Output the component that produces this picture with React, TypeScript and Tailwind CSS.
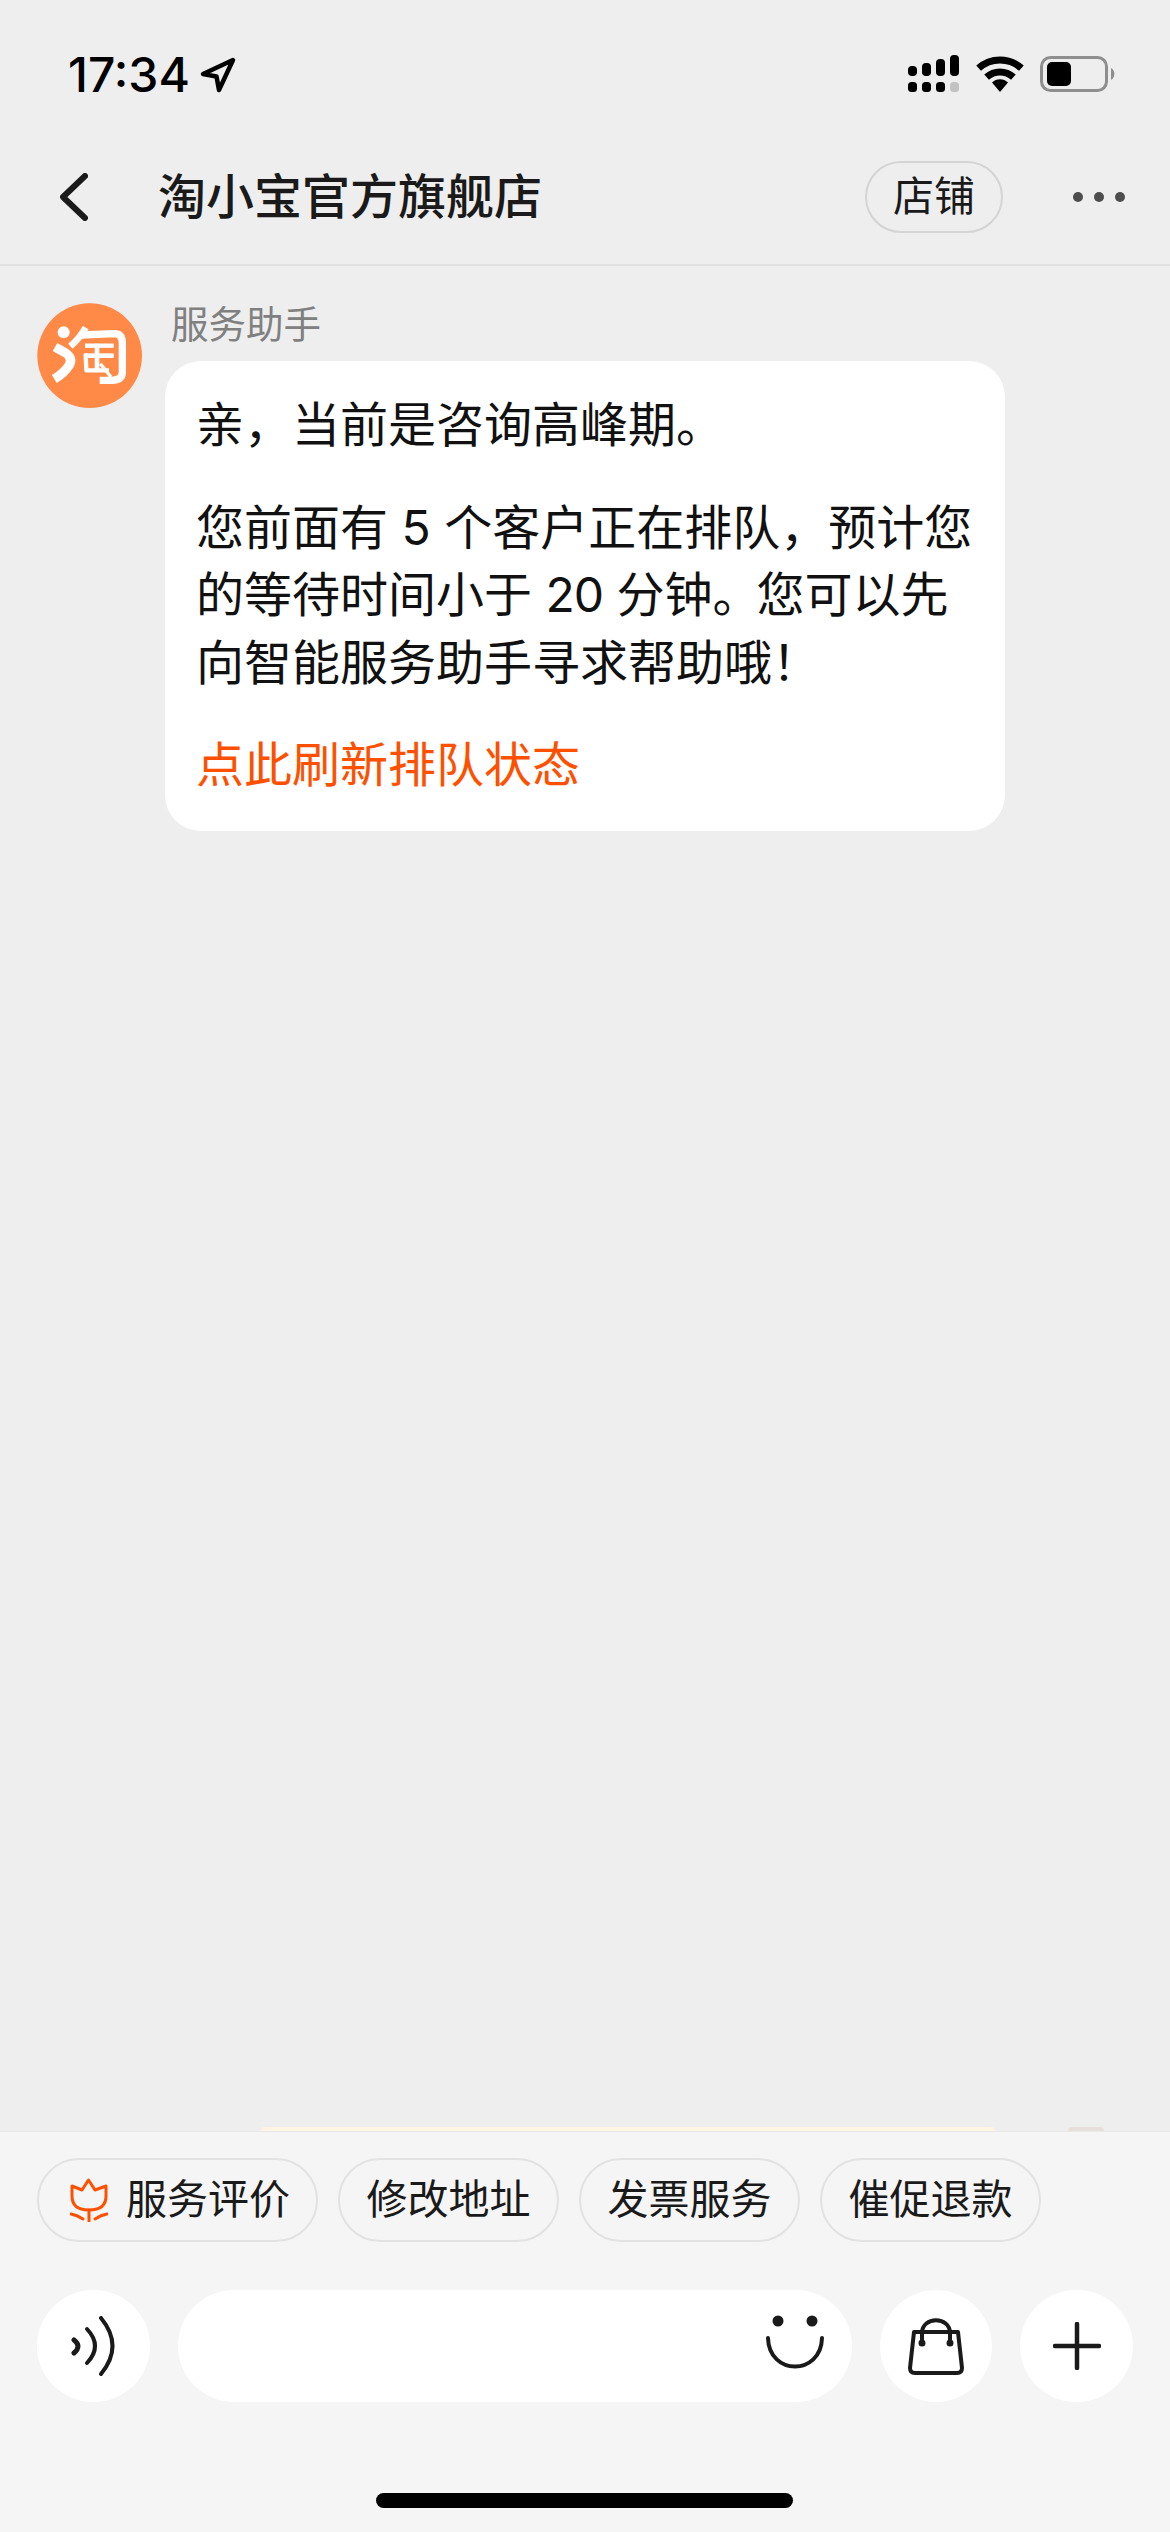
import React from "react";

function Signal() {
  const tops = [11, 8, 4, 0];
  return (
    <svg width="52" height="38" viewBox="0 0 52 38" fill="#000">
      {tops.map((t, i) => (
        <rect key={i} x={i * 14} y={t} width="9" height={21 - t} rx="4" />
      ))}
      {[0, 1, 2, 3].map((i) => (
        <rect key={i} x={i * 14} y="27" width="9" height="10" rx="3.5" fill={i === 3 ? "#c2c2c2" : "#000"} />
      ))}
    </svg>
  );
}

function Wifi() {
  return (
    <svg width="48" height="36" viewBox="0 0 48 36" fill="none" stroke="#000" strokeWidth="7">
      <path d="M2.6 12.2A32 32 0 0 1 45.4 12.2" />
      <path d="M10.6 21.1A20 20 0 0 1 37.4 21.1" />
      <path d="M24 36L16 26.6A11 11 0 0 1 32 26.6Z" fill="#000" stroke="none" />
    </svg>
  );
}

function Battery() {
  return (
    <svg width="76" height="36" viewBox="0 0 76 36">
      <rect x="1.5" y="1.5" width="65" height="33" rx="9" fill="none" stroke="#8e8e8e" strokeWidth="3" />
      <rect x="7" y="6" width="24" height="24" rx="5" fill="#000" />
      <path d="M71 12a7 7 0 0 1 0 12Z" fill="#8e8e8e" />
    </svg>
  );
}

function TaoLogo() {
  return (
    <svg className="w-[105px] h-[105px] shrink-0" viewBox="50 40 315 315">
      <circle cx="208" cy="198" r="157" fill="#ff8a47" />
      <g fill="none" stroke="#fff" strokeLinecap="butt" strokeLinejoin="round">
        <circle cx="130" cy="128" r="18" fill="#fff" stroke="none" />
        <path d="M104 172L136 190Q158 205 147 226Q132 250 102 268" strokeWidth="28" />
        <path d="M196 114Q178 146 150 170" strokeWidth="20" />
        <path d="M180 136L282 132Q306 132 306 160V248Q306 272 274 272H238" strokeWidth="22" />
        <path d="M194 168H280" strokeWidth="13" />
        <path d="M192 198H280" strokeWidth="14" />
        <path d="M196 192L198 242H266" strokeWidth="13" />
        <path d="M230 162V238" strokeWidth="14" />
        <path d="M240 222L272 262" strokeWidth="10" />
      </g>
    </svg>
  );
}

function Tulip() {
  return (
    <svg width="38" height="44" viewBox="0 0 38 44" fill="none" stroke="#ff5000" strokeWidth="3" strokeLinecap="round" strokeLinejoin="round">
      <path d="M2 8L12 12L18.500 2L25 12L36 8V18Q36 32 19 32Q2 32 2 18Z" />
      <path d="M19 32V43" />
      <path d="M1 36Q7 37 13 41" />
      <path d="M37 36Q31 37 25 41" />
    </svg>
  );
}

function Chip({ label, icon }: { label: string; icon?: boolean }) {
  return (
    <div className={`h-[84px] rounded-full border-2 border-[#e2e2e2] flex items-center text-[41px] text-[#1a1a1a] whitespace-nowrap ${icon ? "w-[281px] pl-[31px] gap-[18px]" : "w-[221px] justify-center"}`}>
      {icon ? <Tulip /> : null}
      <span>{label}</span>
    </div>
  );
}

export default function App() {
  return (
    <div className="w-[1170px] h-[2532px] bg-[#eeeeee] flex flex-col overflow-hidden font-['Inter','Noto_Sans_CJK_SC',sans-serif]">
      <div className="h-[127px] shrink-0 flex items-start justify-between pt-[50px] pl-[68px] pr-[54px]">
        <div className="flex items-center gap-[10px] h-[50px]">
          <span className="text-[48px] leading-[50px] font-medium text-black">17:34</span>
          <svg width="36" height="36" viewBox="0 0 36 36" fill="none" stroke="#000" strokeWidth="4.500" strokeLinejoin="round">
            <path d="M33 3L3 17L16.500 19.500L19 33Z" />
          </svg>
        </div>
        <div className="flex items-center gap-[16px] h-[38px] mt-[5px]">
          <Signal />
          <Wifi />
          <Battery />
        </div>
      </div>

      <div className="h-[139px] shrink-0 flex items-center border-b-2 border-[#e0e0e0] pl-[60px] pr-[45px] pt-[2px]">
        <svg width="28" height="48" viewBox="0 0 28 48" fill="none" stroke="#1a1a1a" strokeWidth="6" strokeLinecap="round" strokeLinejoin="round" className="shrink-0">
          <path d="M25 3L3 24L25 45" />
        </svg>
        <span className="ml-[70px] text-[48px] leading-[60px] font-medium text-[#1a1a1a] whitespace-nowrap">淘小宝官方旗舰店</span>
        <div className="ml-auto w-[138px] h-[72px] rounded-full border-2 border-[#d4d4d4] flex items-center justify-center text-[41px] text-[#1a1a1a]">店铺</div>
        <div className="ml-[70px] flex gap-[11px]">
          <span className="w-[10px] h-[10px] rounded-full bg-[#4d4d4d]" />
          <span className="w-[10px] h-[10px] rounded-full bg-[#4d4d4d]" />
          <span className="w-[10px] h-[10px] rounded-full bg-[#4d4d4d]" />
        </div>
      </div>

      <div className="flex-1 flex items-start gap-[23px] pl-[37px] pt-[37px]">
        <TaoLogo />
        <div className="flex flex-col">
          <div className="h-[44px] leading-[44px] mb-[14px] pl-[6px] text-[37.500px] text-[#808080] whitespace-nowrap">服务助手</div>
          <div className="w-[840px] bg-white rounded-[36px] pl-[31px] pt-[30px] pb-[32px] text-[48px] leading-[67.500px] text-[#111111] whitespace-nowrap">
            <p>亲，当前是咨询高峰期。</p>
            <p className="mt-[35px]">您前面有 5 个客户正在排队，预计您</p>
            <p>的等待时间小于 <span className="tracking-[-1px]">20</span> 分钟<span className="tracking-[-4px]">。</span>您可以先</p>
            <p>向智能服务助手寻求帮助哦！</p>
            <p className="mt-[35px] text-[#ff5000]">点此刷新排队状态</p>
          </div>
        </div>
      </div>

      <div className="relative h-[401px] shrink-0 bg-[#f5f5f5] border-t border-[#e8e8e8] pl-[37px] pr-[37px] pt-[26px]">
        <div className="absolute left-[261px] top-[-5px] w-[734px] h-[4px] rounded-t-[8px] bg-[#fff5e4]" />
        <div className="absolute left-[1068px] top-[-5px] w-[36px] h-[4px] rounded-t-[18px] bg-[#e6dfdc]" />
        <div className="flex gap-[20px]">
          <Chip label="服务评价" icon />
          <Chip label="修改地址" />
          <Chip label="发票服务" />
          <Chip label="催促退款" />
        </div>
        <div className="flex items-center mt-[48px] h-[112px]">
          <div className="w-[113px] h-[112px] rounded-full bg-white flex items-center justify-center shrink-0">
            <svg width="44" height="60" viewBox="0 0 44 60" fill="none" stroke="#1a1a1a" strokeWidth="4" strokeLinecap="round" className="ml-[-2px]">
              <path d="M3 24Q11 30 3 37" strokeWidth="5" />
              <path d="M16 13Q32 30 16 47" />
              <path d="M30 2Q53 30 30 58" />
            </svg>
          </div>
          <div className="ml-[28px] w-[674px] h-[112px] rounded-full bg-white flex items-center justify-end pr-[28px] shrink-0">
            <svg width="58" height="62" viewBox="0 0 58 62" fill="none" stroke="#1a1a1a" strokeWidth="4" strokeLinecap="round" className="mb-[2px]">
              <circle cx="12" cy="7" r="5.500" fill="#1a1a1a" stroke="none" />
              <circle cx="46" cy="7" r="5.500" fill="#1a1a1a" stroke="none" />
              <path d="M2 24C3 62 55 62 56 24" />
            </svg>
          </div>
          <div className="ml-[28px] w-[112px] h-[112px] rounded-full bg-white flex items-center justify-center shrink-0">
            <svg width="56" height="57" viewBox="0 0 56 57" fill="none" stroke="#1a1a1a" strokeWidth="4" strokeLinecap="round" strokeLinejoin="round">
              <path d="M6 14H50L54 50Q54 55 49 55H7Q2 55 2 50Z" />
              <path d="M14 25V15C14 -2 42 -2 42 15V25" />
              <circle cx="14" cy="25" r="1.500" fill="#1a1a1a" />
              <circle cx="42" cy="25" r="1.500" fill="#1a1a1a" />
            </svg>
          </div>
          <div className="ml-[28px] w-[113px] h-[112px] rounded-full bg-white flex items-center justify-center shrink-0">
            <svg width="48" height="48" viewBox="0 0 48 48" fill="none" stroke="#1a1a1a" strokeWidth="4.500" strokeLinecap="round">
              <path d="M24 2V46M2 24H46" />
            </svg>
          </div>
        </div>
        <div className="mt-[91px] mx-auto w-[417px] h-[15px] rounded-full bg-black relative left-[-0.5px]" />
      </div>
    </div>
  );
}
